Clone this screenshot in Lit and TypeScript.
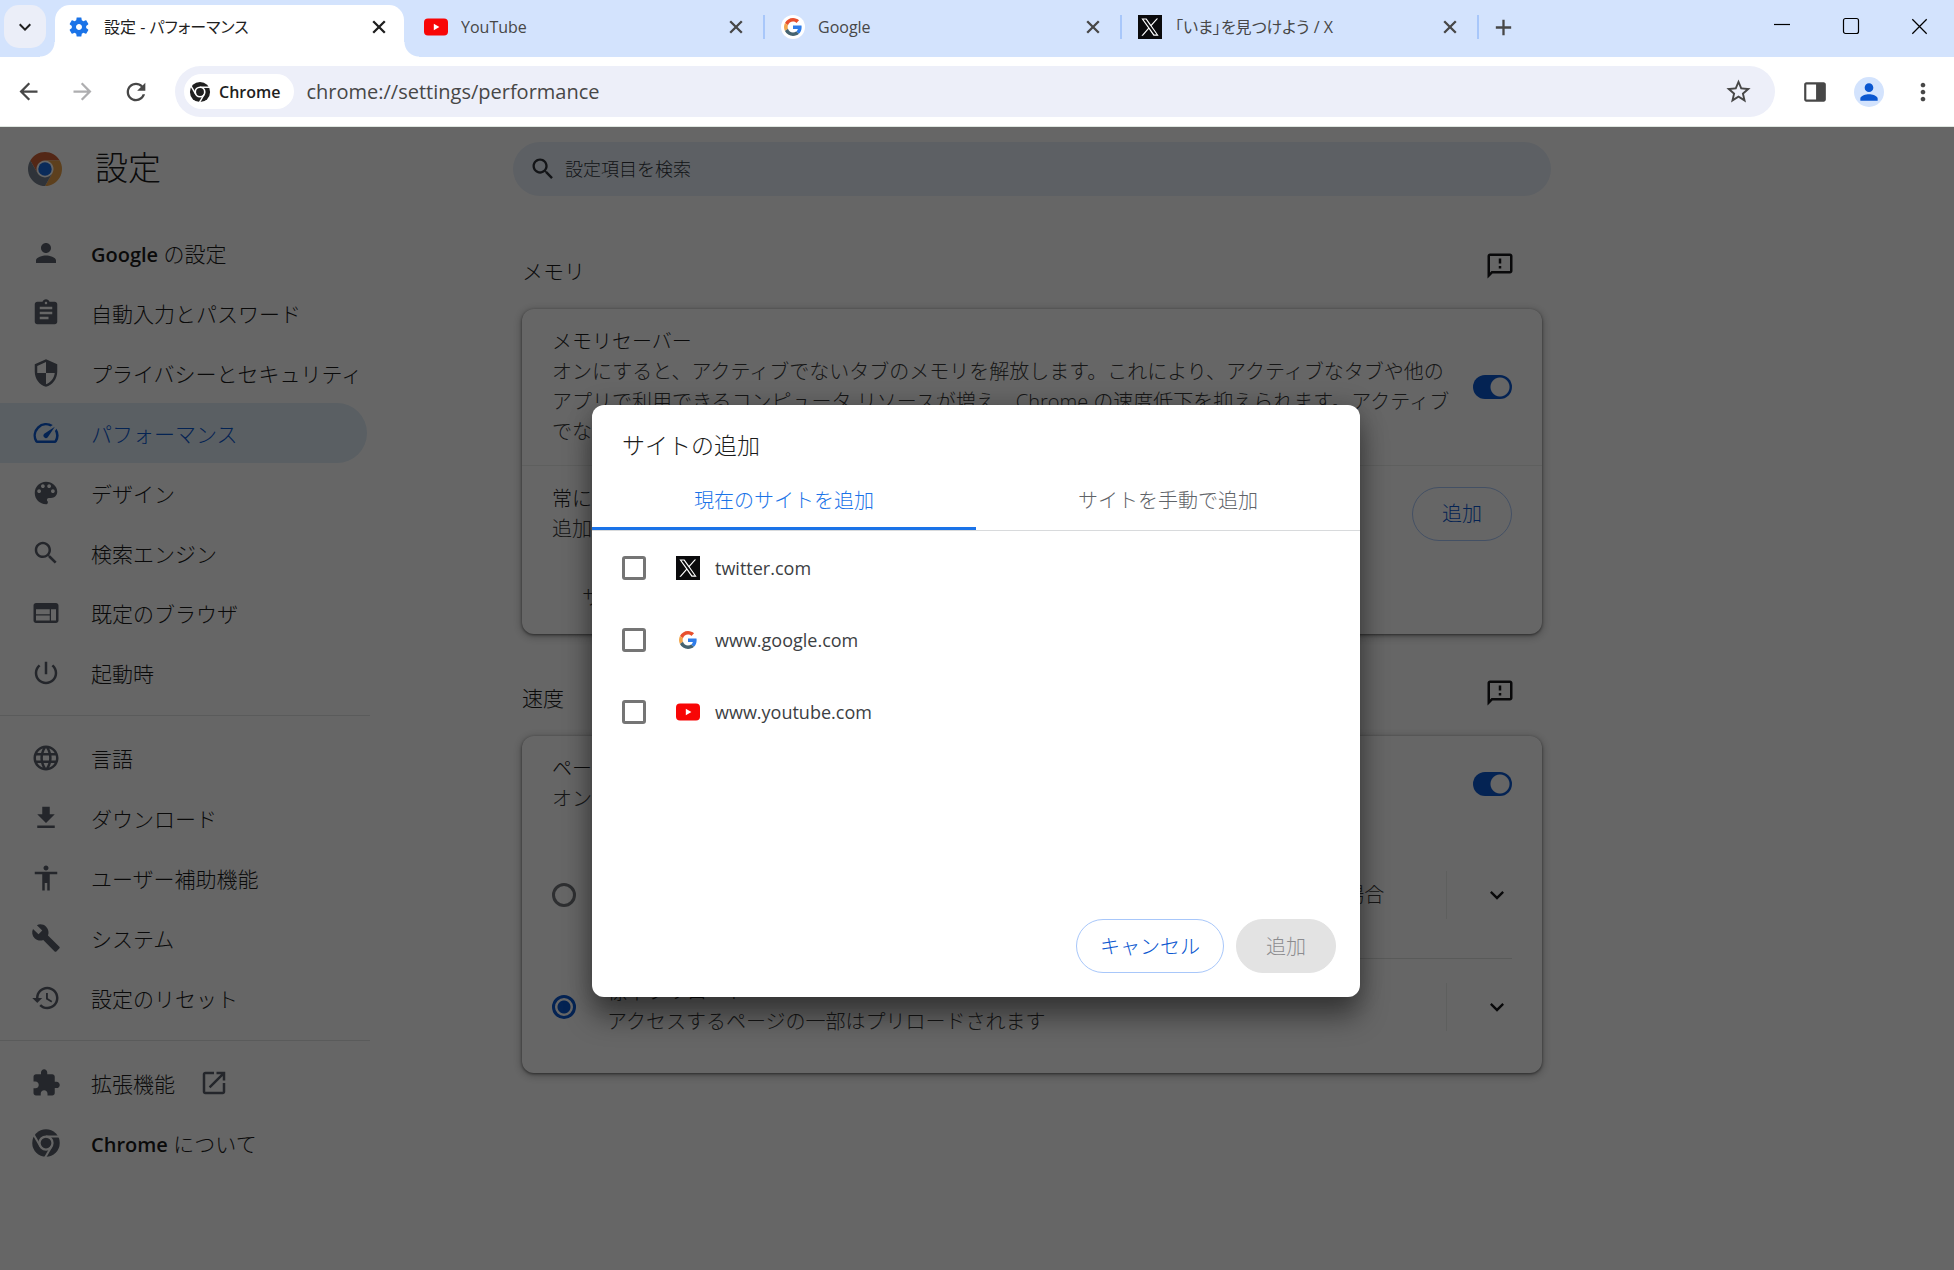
import { LitElement, html, css, svg, nothing } from "lit";
import { customElement, property } from "lit/decorators.js";
import { classMap } from "lit/directives/class-map.js";

const PATHS: Record<string, string> = {
  person:
    "M12 12c2.21 0 4-1.79 4-4s-1.79-4-4-4-4 1.79-4 4 1.79 4 4 4zm0 2c-2.67 0-8 1.34-8 4v2h16v-2c0-2.66-5.33-4-8-4z",
  assignment:
    "M19 3h-4.18C14.4 1.84 13.3 1 12 1c-1.3 0-2.4.84-2.82 2H5c-1.1 0-2 .9-2 2v14c0 1.1.9 2 2 2h14c1.1 0 2-.9 2-2V5c0-1.1-.9-2-2-2zm-7 0c.55 0 1 .45 1 1s-.45 1-1 1-1-.45-1-1 .45-1 1-1zm2 14H7v-2h7v2zm3-4H7v-2h10v2zm0-4H7V7h10v2z",
  security:
    "M12 1L3 5v6c0 5.55 3.84 10.74 9 12 5.16-1.26 9-6.45 9-12V5l-9-4zm0 10.99h7c-.53 4.12-3.28 7.79-7 8.94V12H5V6.3l7-3.11v8.8z",
  speed:
    "M20.38 8.57l-1.23 1.85a8 8 0 0 1-.22 7.58H5.07A8 8 0 0 1 15.58 6.85l1.85-1.23A10 10 0 0 0 3.35 19a2 2 0 0 0 1.72 1h13.85a2 2 0 0 0 1.74-1 10 10 0 0 0-.27-10.44zm-9.79 6.84a2 2 0 0 0 2.83 0l5.66-8.49-8.49 5.66a2 2 0 0 0 0 2.83z",
  palette:
    "M12 3c-4.97 0-9 4.03-9 9s4.03 9 9 9c.83 0 1.5-.67 1.5-1.5 0-.39-.15-.74-.39-1.01-.23-.26-.38-.61-.38-.99 0-.83.67-1.5 1.5-1.5H16c2.76 0 5-2.24 5-5 0-4.42-4.03-8-9-8zm-5.5 9c-.83 0-1.5-.67-1.5-1.5S5.67 9 6.5 9 8 9.67 8 10.5 7.33 12 6.5 12zm3-4C8.67 8 8 7.33 8 6.5S8.67 5 9.5 5s1.5.67 1.5 1.5S10.33 8 9.5 8zm5 0c-.83 0-1.5-.67-1.5-1.5S13.67 5 14.5 5s1.5.67 1.5 1.5S15.33 8 14.5 8zm3 4c-.83 0-1.5-.67-1.5-1.5S16.67 9 17.5 9s1.5.67 1.5 1.5-.67 1.5-1.5 1.5z",
  search:
    "M15.5 14h-.79l-.28-.27C15.41 12.59 16 11.11 16 9.5 16 5.91 13.09 3 9.5 3S3 5.91 3 9.5 5.91 16 9.5 16c1.61 0 3.09-.59 4.23-1.57l.27.28v.79l5 4.99L20.49 19l-4.99-5zm-6 0C7.01 14 5 11.99 5 9.5S7.01 5 9.5 5 14 7.01 14 9.5 11.99 14 9.5 14z",
  web: "M20 4H4c-1.1 0-1.99.9-1.99 2L2 18c0 1.1.9 2 2 2h16c1.1 0 2-.9 2-2V6c0-1.1-.9-2-2-2zm-5 14H4v-4h11v4zm0-5H4V9h11v4zm5 5h-4V9h4v9z",
  power:
    "M13 3h-2v10h2V3zm4.83 2.17l-1.42 1.42C17.99 7.86 19 9.81 19 12c0 3.87-3.13 7-7 7s-7-3.13-7-7c0-2.19 1.01-4.14 2.58-5.42L6.17 5.17C4.23 6.82 3 9.26 3 12c0 4.97 4.03 9 9 9s9-4.03 9-9c0-2.74-1.23-5.18-3.17-6.83z",
  language:
    "M11.99 2C6.47 2 2 6.48 2 12s4.47 10 9.99 10C17.52 22 22 17.52 22 12S17.52 2 11.99 2zm6.93 6h-2.95c-.32-1.25-.78-2.45-1.38-3.56 1.84.63 3.37 1.91 4.33 3.56zM12 4.04c.83 1.2 1.48 2.53 1.91 3.96h-3.82c.43-1.43 1.08-2.76 1.91-3.96zM4.26 14C4.1 13.36 4 12.69 4 12s.1-1.36.26-2h3.38c-.08.66-.14 1.32-.14 2 0 .68.06 1.34.14 2H4.26zm.82 2h2.95c.32 1.25.78 2.45 1.38 3.56-1.84-.63-3.37-1.9-4.33-3.56zm2.95-8H5.08c.96-1.66 2.49-2.93 4.33-3.56C8.81 5.55 8.35 6.75 8.03 8zM12 19.96c-.83-1.2-1.48-2.53-1.91-3.96h3.82c-.43 1.43-1.08 2.76-1.91 3.96zM14.34 14H9.66c-.09-.66-.16-1.32-.16-2 0-.68.07-1.35.16-2h4.68c.09.65.16 1.32.16 2 0 .68-.07 1.34-.16 2zm.25 5.56c.6-1.11 1.06-2.31 1.38-3.56h2.95c-.96 1.65-2.49 2.93-4.33 3.56zM16.36 14c.08-.66.14-1.32.14-2 0-.68-.06-1.34-.14-2h3.38c.16.64.26 1.31.26 2s-.1 1.36-.26 2h-3.38z",
  download: "M19 9h-4V3H9v6H5l7 7 7-7zM5 18v2h14v-2H5z",
  accessibility:
    "M12 2c1.1 0 2 .9 2 2s-.9 2-2 2-2-.9-2-2 .9-2 2-2zm9 7h-6v13h-2v-6h-2v6H9V9H3V7h18v2z",
  build:
    "M22.7 19l-9.1-9.1c.9-2.3.4-5-1.5-6.9-2-2-5-2.4-7.4-1.3L9 6 6 9 1.6 4.7C.4 7.1.9 10.1 2.9 12.1c1.9 1.9 4.6 2.4 6.9 1.5l9.1 9.1c.4.4 1 .4 1.4 0l2.3-2.3c.5-.4.5-1.1.1-1.4z",
  restore:
    "M13 3c-4.97 0-9 4.03-9 9H1l3.89 3.89.07.14L9 12H6c0-3.87 3.13-7 7-7s7 3.13 7 7-3.13 7-7 7c-1.93 0-3.68-.79-4.94-2.06l-1.42 1.42C8.27 19.99 10.51 21 13 21c4.97 0 9-4.03 9-9s-4.03-9-9-9zm-1 5v5l4.28 2.54.72-1.21-3.5-2.08V8H12z",
  extension:
    "M20.5 11H19V7c0-1.1-.9-2-2-2h-4V3.5C13 2.12 11.88 1 10.5 1S8 2.12 8 3.5V5H4c-1.1 0-1.99.9-1.99 2v3.8H3.5c1.49 0 2.7 1.21 2.7 2.7s-1.21 2.7-2.7 2.7H2V20c0 1.1.9 2 2 2h3.8v-1.5c0-1.49 1.21-2.7 2.7-2.7 1.49 0 2.7 1.21 2.7 2.7V22H17c1.1 0 2-.9 2-2v-4h1.5c1.38 0 2.5-1.12 2.5-2.5S21.88 11 20.5 11z",
  openNew:
    "M19 19H5V5h7V3H5c-1.11 0-2 .9-2 2v14c0 1.1.89 2 2 2h14c1.1 0 2-.9 2-2v-7h-2v7zM14 3v2h3.59l-9.83 9.83 1.41 1.41L19 6.41V10h2V3h-7z",
  feedback:
    "M20 2H4c-1.1 0-2 .9-2 2v18l4-4h14c1.1 0 2-.9 2-2V4c0-1.1-.9-2-2-2zm0 14H5.17L4 17.17V4h16v12zM11 12h2v2h-2zM11 6h2v4h-2z",
  gear: "M19.14 12.94c.04-.3.06-.61.06-.94 0-.32-.02-.64-.07-.94l2.03-1.58c.18-.14.23-.41.12-.61l-1.92-3.32c-.12-.22-.37-.29-.59-.22l-2.39.96c-.5-.38-1.03-.7-1.62-.94l-.36-2.54c-.04-.24-.24-.41-.48-.41h-3.84c-.24 0-.43.17-.47.41l-.36 2.54c-.59.24-1.13.57-1.62.94l-2.39-.96c-.22-.08-.47 0-.59.22L2.74 8.87c-.12.21-.08.47.12.61l2.03 1.58c-.05.3-.09.63-.09.94s.02.64.07.94l-2.03 1.58c-.18.14-.23.41-.12.61l1.92 3.32c.12.22.37.29.59.22l2.39-.96c.5.38 1.03.7 1.62.94l.36 2.54c.05.24.24.41.48.41h3.84c.24 0 .44-.17.47-.41l.36-2.54c.59-.24 1.13-.56 1.62-.94l2.39.96c.22.08.47 0 .59-.22l1.92-3.32c.12-.22.07-.47-.12-.61l-2.01-1.58zM12 15c-1.65 0-3-1.35-3-3s1.35-3 3-3 3 1.35 3 3-1.35 3-3 3z",
  back: "M20 11H7.83l5.59-5.59L12 4l-8 8 8 8 1.41-1.41L7.83 13H20v-2z",
  forward: "M4 11h12.17l-5.59-5.59L12 4l8 8-8 8-1.41-1.41L16.17 13H4v-2z",
  reload:
    "M17.65 6.35C16.2 4.9 14.21 4 12 4c-4.42 0-7.99 3.58-7.99 8s3.57 8 7.99 8c3.73 0 6.84-2.55 7.73-6h-2.08c-.82 2.33-3.04 4-5.65 4-3.31 0-6-2.69-6-6s2.69-6 6-6c1.66 0 3.14.69 4.22 1.78L13 11h7V4l-2.35 2.35z",
  star: "M22 9.24l-7.19-.62L12 2 9.19 8.63 2 9.24l5.46 4.73L5.82 21 12 17.27 18.18 21l-1.63-7.03L22 9.24zM12 15.4l-3.76 2.27 1-4.28-3.32-2.88 4.38-.38L12 6.1l1.71 4.04 4.38.38-3.32 2.88 1 4.28L12 15.4z",
  panel:
    "M20 3H4c-1.1 0-2 .9-2 2v14c0 1.1.9 2 2 2h16c1.1 0 2-.9 2-2V5c0-1.1-.9-2-2-2zM4 5h9v14H4V5z",
  chevron: "M7.41 8.59L12 13.17l4.59-4.58L18 10l-6 6-6-6z",
  more: "M12 8c1.1 0 2-.9 2-2s-.9-2-2-2-2 .9-2 2 .9 2 2 2zm0 2c-1.1 0-2 .9-2 2s.9 2 2 2 2-.9 2-2-.9-2-2-2zm0 6c-1.1 0-2 .9-2 2s.9 2 2 2 2-.9 2-2-.9-2-2-2z",
};

/* Artwork that needs more than one flat path. */
const ART: Record<string, unknown> = {
  chromeMono: svg`
    <circle cx="12" cy="12" r="11" fill="currentColor"/>
    <circle cx="12" cy="12" r="5.2" fill="currentColor" stroke="#fff" stroke-width="1.8"/>
    <g stroke="#fff" stroke-width="1.6">
      <path d="M12 6.8H23.4"/>
      <path d="M12 6.8H23.4" transform="rotate(120 12 12)"/>
      <path d="M12 6.8H23.4" transform="rotate(240 12 12)"/>
    </g>`,
  chromeColor: svg`<g transform="scale(.5)">
      <circle cx="24" cy="24" r="12" fill="#fff"/>
      <path fill="#cf6238" d="M24 12H44.78a24 24 0 0 0-41.56 0L13.61 30l.01 0A12 12 0 0 1 24 12Z"/>
      <path fill="#e8a04a" d="M34.39 30 24 48A24 24 0 0 0 44.78 12H24l0 .01A12 12 0 0 1 34.39 30Z"/>
      <path fill="#76808e" d="M13.61 30 3.22 12A24 24 0 0 0 24 48L34.39 30l0 0a12 12 0 0 1-20.78 0Z"/>
      <circle cx="24" cy="24" r="9.5" fill="#1a6be0"/>
    </g>`,
  google: svg`<g transform="translate(3 3) scale(.375)">
      <path fill="#e8502e" d="M24 9.5c3.54 0 6.71 1.22 9.21 3.6l6.85-6.85C35.9 2.38 30.47 0 24 0 14.62 0 6.51 5.38 2.56 13.22l7.98 6.19C12.43 13.72 17.74 9.5 24 9.5z"/>
      <path fill="#2f7de9" d="M46.98 24.55c0-1.57-.15-3.09-.38-4.55H24v9.02h12.94c-.58 2.96-2.26 5.48-4.78 7.18l7.73 6c4.51-4.18 7.09-10.36 7.09-17.65z"/>
      <path fill="#f2a64c" d="M10.53 28.59c-.48-1.45-.76-2.99-.76-4.59s.27-3.14.76-4.59l-7.98-6.19C.92 16.46 0 20.12 0 24c0 3.88.92 7.54 2.56 10.78l7.97-6.19z"/>
      <path fill="#456370" d="M24 48c6.48 0 11.93-2.13 15.89-5.81l-7.73-6c-2.15 1.45-4.92 2.3-8.16 2.3-6.26 0-11.57-4.22-13.47-9.91l-7.98 6.19C6.51 42.62 14.62 48 24 48z"/>
    </g>`,
  youtube: svg`
    <rect x="0" y="3.6" width="24" height="16.8" rx="4" fill="#f80606"/>
    <path d="M9.8 8.8v6.4l5.6-3.2z" fill="#fff"/>`,
  x: svg`
    <rect width="24" height="24" fill="#0a0a0c"/>
    <path transform="translate(3.4 3.4) scale(.72)" fill="#fff" d="M14.258 10.152L23.176 0h-2.113l-7.747 8.813L7.133 0H0l9.352 13.328L0 23.973h2.113l8.176-9.309 6.531 9.309h7.133zm-2.895 3.293l-.949-1.328L2.875 1.56h3.246l6.086 8.523.945 1.328 7.91 11.078h-3.246z"/>`,
  close: svg`<path d="M6.2 6.2l11.6 11.6M17.8 6.2l-11.6 11.6" stroke="currentColor" stroke-width="2.3" fill="none"/>`,
  plus: svg`<path d="M12 4v16M4 12h16" stroke="currentColor" stroke-width="2.4" fill="none"/>`,
  minimize: svg`<path d="M4 10.5h16" stroke="currentColor" stroke-width="1.2"/>`,
  maximize: svg`<rect x="4.5" y="4.5" width="15" height="15" rx="2" fill="none" stroke="currentColor" stroke-width="1.2"/>`,
  windowClose: svg`<path d="M4.5 4.5l15 15M19.5 4.5l-15 15" stroke="currentColor" stroke-width="1.3" fill="none"/>`,
};

const icon = (name: string, size: number) => html`
  <svg width=${size} height=${size} viewBox="0 0 24 24" fill="currentColor" aria-hidden="true">
    ${ART[name] ?? svg`<path d=${PATHS[name]} />`}
  </svg>
`;

const base = css`
  :host {
    display: block;
    font-family: "Open Sans", "Noto Sans CJK JP", sans-serif;
    font-weight: 300;
    color: #1b1b1b;
  }
  * {
    box-sizing: border-box;
  }
  svg {
    display: block;
    flex: none;
  }
  button,
  input {
    font: inherit;
    color: inherit;
    margin: 0;
    border: 0;
    padding: 0;
    background: none;
  }
  button {
    display: flex;
    align-items: center;
    justify-content: center;
  }
  a {
    color: inherit;
    text-decoration: none;
  }
  h1,
  h2,
  p,
  ul {
    margin: 0;
    padding: 0;
    font-size: inherit;
    font-weight: inherit;
    list-style: none;
  }
  .pill {
    height: 54px;
    border: 1px solid #a8c7fa;
    border-radius: 27px;
    padding: 0 23px;
    font-size: 20px;
    color: #0b57d0;
    flex: none;
  }
  .pill.short {
    padding: 0 29px;
  }
`;

@customElement("browser-tabs")
class BrowserTabs extends LitElement {
  static styles = [
    base,
    css`
      .strip {
        display: flex;
        height: 57px;
        background: #d3e3fd;
        color: #474747;
        padding-left: 4px;
      }
      .list {
        width: 42px;
        height: 43px;
        margin: 5px 5px 0 0;
        border-radius: 15px;
        background: #ebeef8;
        color: #1f1f1f;
        flex: none;
      }
      .tab {
        flex: 0 1 357px;
        min-width: 0;
        display: flex;
        align-items: center;
        height: 44px;
        padding: 0 17px 0 16px;
        margin-top: 5px;
        position: relative;
      }
      .tab.active {
        height: 52px;
        padding: 0 13px 8px 12px;
        margin: 5px 4px 0;
        flex-basis: 349px;
        background: #fff;
        border-radius: 15px 15px 0 0;
        color: #1f1f1f;
      }
      .tab.active::before,
      .tab.active::after {
        content: "";
        position: absolute;
        bottom: 0;
        width: 15px;
        height: 15px;
      }
      .tab.active::before {
        right: 100%;
        background: radial-gradient(circle at 0 0, transparent 14px, #fff 15px);
      }
      .tab.active::after {
        left: 100%;
        background: radial-gradient(circle at 100% 0, transparent 14px, #fff 15px);
      }
      .tab.ruled::after {
        content: "";
        position: absolute;
        right: 0;
        top: 10px;
        width: 2px;
        height: 24px;
        background: #a8c7fa;
      }
      .favicon {
        color: #1a73e8;
      }
      .disc {
        border-radius: 50%;
        background: #fff;
      }
      .title {
        flex: 1;
        min-width: 0;
        margin-left: 13px;
        overflow: hidden;
        white-space: nowrap;
        font-size: 16px;
        line-height: 24px;
        font-weight: 400;
        font-feature-settings: "palt";
      }
      .add {
        width: 48px;
        height: 44px;
        margin-top: 5px;
      }
      .window {
        margin-left: auto;
        display: flex;
        height: 52px;
        color: #000;
      }
      .window button {
        width: 69px;
      }
    `,
  ];

  tabs = [
    { title: "設定 - パフォーマンス", art: "gear", active: true },
    { title: "YouTube", art: "youtube" },
    { title: "Google", art: "google" },
    { title: "「いま」を見つけよう / X", art: "x" },
  ];

  render() {
    return html`
      <div class="strip">
        <button class="list" aria-label="タブを検索">${icon("chevron", 24)}</button>
        ${this.tabs.map(
          (t) => html`
            <div class=${classMap({ tab: true, active: !!t.active, ruled: !t.active })}>
              <span class=${classMap({ favicon: true, disc: t.art === "google" })}
                >${icon(t.art, 24)}</span
              >
              <span class="title">${t.title}</span>
              <button aria-label="閉じる">${icon("close", 24)}</button>
            </div>
          `
        )}
        <button class="add" aria-label="新しいタブ">${icon("plus", 23)}</button>
        <div class="window">
          <button aria-label="最小化">${icon("minimize", 24)}</button>
          <button aria-label="最大化">${icon("maximize", 24)}</button>
          <button aria-label="ウィンドウを閉じる">${icon("windowClose", 23)}</button>
        </div>
      </div>
    `;
  }
}

@customElement("browser-toolbar")
class BrowserToolbar extends LitElement {
  static styles = [
    base,
    css`
      .bar {
        display: flex;
        align-items: center;
        height: 70px;
        padding: 0 4px 0 1px;
        background: #fff;
        border-bottom: 1px solid #dfe6e0;
        color: #474747;
      }
      .nav {
        width: 54px;
        height: 48px;
        flex: none;
      }
      .nav.off {
        color: #aeaeb0;
      }
      .address {
        flex: 1;
        min-width: 0;
        display: flex;
        align-items: center;
        height: 51px;
        margin: 0 13px 0 12px;
        padding: 0 22px 0 9px;
        border-radius: 26px;
        background: #edeff9;
      }
      .chip {
        display: flex;
        align-items: center;
        gap: 8px;
        height: 35px;
        padding: 0 14px 0 5px;
        border-radius: 18px;
        background: #fff;
        color: #1f1f1f;
        font-size: 16px;
        font-weight: 600;
      }
      .url {
        flex: 1;
        min-width: 0;
        margin-left: 12px;
        font-size: 20px;
        font-weight: 400;
        color: #474747;
      }
      .profile {
        width: 54px;
        flex: none;
      }
      .avatar {
        width: 30px;
        height: 30px;
        border-radius: 50%;
        background: #d3e3fd;
        color: #0b57d0;
        display: grid;
        place-items: center;
      }
    `,
  ];

  render() {
    return html`
      <div class="bar">
        <button class="nav" aria-label="戻る">${icon("back", 27)}</button>
        <button class="nav off" aria-label="進む" disabled>${icon("forward", 27)}</button>
        <button class="nav" aria-label="再読み込み">${icon("reload", 28)}</button>
        <div class="address">
          <button class="chip">${icon("chromeMono", 22)}Chrome</button>
          <input class="url" aria-label="アドレスバー" value="chrome://settings/performance" />
          <button aria-label="ブックマーク">${icon("star", 29)}</button>
        </div>
        <button class="nav" aria-label="サイドパネル">${icon("panel", 26)}</button>
        <button class="profile" aria-label="プロフィール">
          <span class="avatar">${icon("person", 26)}</span>
        </button>
        <button class="nav" aria-label="メニュー">${icon("more", 28)}</button>
      </div>
    `;
  }
}

interface NavItem {
  label: string;
  icon: string;
  brand?: string;
  selected?: boolean;
  external?: boolean;
}

@customElement("settings-nav")
class SettingsNav extends LitElement {
  static styles = [
    base,
    css`
      nav {
        padding-top: 12px;
      }
      .group + .group {
        margin-top: 12px;
        padding-top: 12px;
        border-top: 1px solid #e2e4e3;
      }
      .item {
        display: flex;
        align-items: center;
        height: 60px;
        margin-right: 3px;
        padding-left: 31px;
        border-radius: 0 30px 30px 0;
        font-size: 21px;
        white-space: nowrap;
      }
      .item svg {
        color: #5a606b;
      }
      .label {
        margin-left: 30px;
      }
      .brand {
        font-size: 20px;
        font-weight: 600;
      }
      .item.selected {
        background: #e0edf8;
        color: #0b57d0;
      }
      .item.selected svg {
        color: #0b57d0;
      }
      .label + svg {
        margin-left: 24px;
      }
    `,
  ];

  groups: NavItem[][] = [
    [
      { brand: "Google", label: " の設定", icon: "person" },
      { label: "自動入力とパスワード", icon: "assignment" },
      { label: "プライバシーとセキュリティ", icon: "security" },
      { label: "パフォーマンス", icon: "speed", selected: true },
      { label: "デザイン", icon: "palette" },
      { label: "検索エンジン", icon: "search" },
      { label: "既定のブラウザ", icon: "web" },
      { label: "起動時", icon: "power" },
    ],
    [
      { label: "言語", icon: "language" },
      { label: "ダウンロード", icon: "download" },
      { label: "ユーザー補助機能", icon: "accessibility" },
      { label: "システム", icon: "build" },
      { label: "設定のリセット", icon: "restore" },
    ],
    [
      { label: "拡張機能", icon: "extension", external: true },
      { brand: "Chrome", label: " について", icon: "chromeMono" },
    ],
  ];

  render() {
    return html`
      <nav>
        ${this.groups.map(
          (g) => html`<ul class="group">
            ${g.map(
              (i) => html`<li>
                <a href="#" class=${classMap({ item: true, selected: !!i.selected })}>
                  ${icon(i.icon, 30)}
                  <span class="label"
                    >${i.brand ? html`<span class="brand">${i.brand}</span>` : nothing}${i.label}</span
                  >
                  ${i.external ? icon("openNew", 30) : nothing}
                </a>
              </li>`
            )}
          </ul>`
        )}
      </nav>
    `;
  }
}

@customElement("settings-performance")
class SettingsPerformance extends LitElement {
  static styles = [
    base,
    css`
      :host {
        font-size: 20px;
        line-height: 30px;
      }
      main {
        padding-top: 35px;
      }
      section + section {
        margin-top: 39px;
      }
      .head {
        display: flex;
        justify-content: space-between;
        align-items: flex-end;
        height: 40px;
        margin-bottom: 23px;
        font-size: 21px;
      }
      .head button {
        width: 40px;
        height: 40px;
        margin-right: 22px;
        color: #18181a;
      }
      .card {
        background: #fff;
        border-radius: 12px;
        box-shadow: 0 1px 3px rgba(0, 0, 0, 0.5), 0 2px 9px 1px rgba(0, 0, 0, 0.25);
      }
      .row {
        display: flex;
        align-items: center;
        padding: 18px 30px;
      }
      .row + .ruled {
        border-top: 1px solid #eceeec;
      }
      .text {
        flex: 1;
        min-width: 0;
      }
      .sub {
        color: #3a3a3a;
      }
      .switch {
        appearance: none;
        flex: none;
        width: 39px;
        height: 24px;
        margin-left: 12px;
        border-radius: 12px;
        background: radial-gradient(circle at 27px 12px, #fff 9px, #0b57d0 10px);
      }
      .empty {
        padding: 21px 60px;
      }
      .option {
        display: flex;
        align-items: center;
        padding-left: 30px;
      }
      .option:last-child {
        padding-bottom: 18px;
      }
      .radio {
        appearance: none;
        flex: none;
        width: 24px;
        height: 24px;
        border: 3px solid #74777b;
        border-radius: 50%;
      }
      .radio:checked {
        border-color: #0b57d0;
        background: radial-gradient(circle, #0b57d0 6px, transparent 7px);
      }
      .option + .option .choice {
        border-top: 1px solid #dfe1df;
      }
      .choice {
        flex: 1;
        min-width: 0;
        display: flex;
        align-items: center;
        margin: 0 30px 0 31px;
        padding: 18px 0;
      }
      .choice .text {
        padding-right: 44px;
      }
      .expand {
        flex: none;
        width: 66px;
        height: 48px;
        padding-left: 35px;
        border-left: 1px solid #eceeec;
        color: #18181a;
      }
    `,
  ];

  head(title: string) {
    return html`<div class="head">
      <h2>${title}</h2>
      <button aria-label="フィードバック">${icon("feedback", 30)}</button>
    </div>`;
  }

  option(id: string, title: string, sub: string, checked: boolean) {
    return html`<div class="option">
      <input class="radio" type="radio" name="preload" id=${id} .checked=${checked} />
      <div class="choice">
        <label class="text" for=${id}>
          <div>${title}</div>
          <div class="sub">${sub}</div>
        </label>
        <button class="expand" aria-label="詳細">${icon("chevron", 28)}</button>
      </div>
    </div>`;
  }

  render() {
    return html`
      <main>
        <section>
          ${this.head("メモリ")}
          <div class="card">
            <div class="row">
              <label class="text" for="saver">
                <div>メモリセーバー</div>
                <div class="sub">
                  オンにすると、アクティブでないタブのメモリを解放します。これにより、アクティブなタブや他のアプリで利用できるコンピュータ
                  リソースが増え、Chrome
                  の速度低下を抑えられます。アクティブでないタブは、メモリの解放中は空白で表示されます。
                </div>
              </label>
              <input class="switch" type="checkbox" role="switch" id="saver" checked />
            </div>
            <div class="row ruled">
              <div class="text">
                <div>常にアクティブにするサイト</div>
                <div class="sub">追加したサイトは常にアクティブのままになります</div>
              </div>
              <button class="pill short">追加</button>
            </div>
            <p class="empty sub">サイトは追加されていません</p>
          </div>
        </section>
        <section>
          ${this.head("速度")}
          <div class="card">
            <div class="row">
              <label class="text" for="preload">
                <div>ページのプリロード</div>
                <div class="sub">オンにすると、ページの読み込みが速くなります</div>
              </label>
              <input class="switch" type="checkbox" role="switch" id="preload" checked />
            </div>
            ${this.option(
              "extended",
              "拡張プリロード",
              "閲覧する可能性の高いページがプリロードされます。サイトから別ページへ移った場合は、サーバーを経由することがあります。",
              false
            )}
            ${this.option(
              "standard",
              "標準プリロード",
              "アクセスするページの一部はプリロードされます",
              true
            )}
          </div>
        </section>
      </main>
    `;
  }
}

@customElement("site-dialog")
class SiteDialog extends LitElement {
  static styles = [
    base,
    css`
      .dialog {
        position: static;
        display: flex;
        flex-direction: column;
        width: 768px;
        max-width: 90vw;
        min-height: 592px;
        margin: 0;
        padding: 0;
        border: 0;
        border-radius: 12px;
        background: #fff;
        color: #1b1b1b;
        box-shadow: 0 0 24px rgba(0, 0, 0, 0.2), 0 20px 28px rgba(0, 0, 0, 0.42);
      }
      h2 {
        padding: 23px 30px 8px;
        font-size: 23px;
        line-height: 34px;
      }
      .tabs {
        display: flex;
        border-bottom: 1px solid #d8dadc;
      }
      .tab {
        flex: 1;
        height: 60px;
        border-top: 3px solid transparent;
        border-bottom: 3px solid transparent;
        font-size: 20px;
        color: #5f6368;
      }
      .tab.on {
        border-bottom-color: #1a73e8;
        color: #1a73e8;
      }
      .sites {
        padding-top: 1px;
      }
      .site {
        display: flex;
        align-items: center;
        height: 72px;
        padding: 0 30px;
        font-size: 18px;
        font-weight: 400;
        color: #3c4043;
      }
      .box {
        appearance: none;
        width: 24px;
        height: 24px;
        margin-right: 30px;
        border: 3px solid #757575;
        border-radius: 3px;
      }
      .site svg {
        margin-right: 15px;
      }
      .actions {
        display: flex;
        justify-content: flex-end;
        gap: 12px;
        margin-top: auto;
        padding: 24px;
      }
      .pill.off {
        border-color: #e3e3e3;
        background: #e3e3e3;
        color: #8c8c8f;
      }
    `,
  ];

  @property({ attribute: false }) sites = [
    { host: "twitter.com", art: "x" },
    { host: "www.google.com", art: "google" },
    { host: "www.youtube.com", art: "youtube" },
  ];

  render() {
    return html`
      <dialog class="dialog" open aria-labelledby="title">
        <h2 id="title">サイトの追加</h2>
        <div class="tabs" role="tablist">
          <button class="tab on" role="tab" aria-selected="true">現在のサイトを追加</button>
          <button class="tab" role="tab" aria-selected="false">サイトを手動で追加</button>
        </div>
        <div class="sites">
          ${this.sites.map(
            (s) => html`<label class="site">
              <input class="box" type="checkbox" />${icon(s.art, 24)}<span>${s.host}</span>
            </label>`
          )}
        </div>
        <div class="actions">
          <button class="pill">キャンセル</button>
          <button class="pill short off" disabled>追加</button>
        </div>
      </dialog>
    `;
  }
}

@customElement("app-root")
class AppRoot extends LitElement {
  static styles = [
    base,
    css`
      :host {
        display: flex;
        flex-direction: column;
        min-height: 100vh;
        background: #fff;
      }
      .page {
        position: relative;
        flex: 1;
        overflow: hidden;
      }
      header {
        display: grid;
        grid-template-columns: 370px minmax(0, 1038px);
        column-gap: 143px;
        align-items: center;
        padding-top: 15px;
      }
      .brand {
        display: flex;
        align-items: center;
        padding-left: 28px;
        gap: 33px;
      }
      h1 {
        font-size: 33px;
        line-height: 52px;
        padding-bottom: 2px;
      }
      .search {
        display: flex;
        align-items: center;
        height: 54px;
        padding: 0 16px;
        border-radius: 27px;
        background: #e8f0fa;
        color: #30343a;
      }
      .search input {
        flex: 1;
        min-width: 0;
        margin-left: 8px;
        font-size: 18px;
        outline: 0;
      }
      .search input::placeholder {
        color: #30343a;
        opacity: 1;
      }
      .columns {
        display: grid;
        grid-template-columns: 370px minmax(0, 1020px);
        column-gap: 152px;
        padding-top: 15px;
        align-items: start;
      }
      .scrim {
        position: absolute;
        inset: 0;
        display: flex;
        align-items: center;
        justify-content: center;
        padding: 4px 2px 0 0;
        background: rgba(0, 0, 0, 0.6);
      }
    `,
  ];

  render() {
    return html`
      <browser-tabs></browser-tabs>
      <browser-toolbar></browser-toolbar>
      <div class="page">
        <header>
          <div class="brand">
            ${icon("chromeColor", 34)}
            <h1>設定</h1>
          </div>
          <label class="search">
            ${icon("search", 28)}
            <input type="search" placeholder="設定項目を検索" aria-label="設定項目を検索" />
          </label>
        </header>
        <div class="columns">
          <settings-nav></settings-nav>
          <settings-performance></settings-performance>
        </div>
        <div class="scrim"><site-dialog></site-dialog></div>
      </div>
    `;
  }
}
